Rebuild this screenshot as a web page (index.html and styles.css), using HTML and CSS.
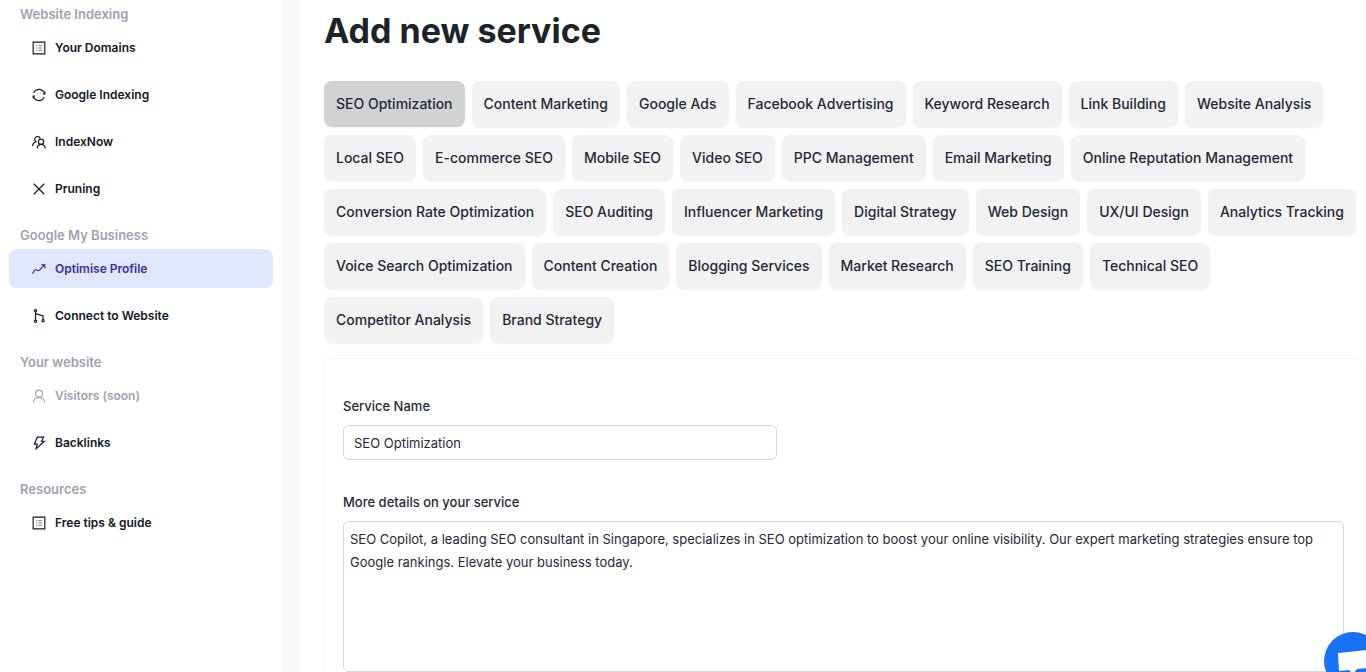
FILE: index.html
```
<!DOCTYPE html>
<html lang="en">
<head>
    <meta charset="UTF-8">
    <meta name="viewport" content="width=device-width, initial-scale=1.0">
    <title>Add new service</title>
    <link rel="stylesheet" href="styles.css">
</head>
<body>

    <!-- shared icons -->
    <svg class="sprite" aria-hidden="true">
        <symbol id="i-list" viewBox="0 0 24 24"><path d="M2 2h20v20H2z"/><path class="thin" d="M11 8h6M11 12h6M11 16h6M7 8h2M7 12h2M7 16h2"/></symbol>
        <symbol id="i-refresh" viewBox="0 0 24 24"><path d="M3 8a10 10 0 0 1 18 0M22 6v4h-3M21 16a10 10 0 0 1-18 0M2 18v-4h3"/></symbol>
        <symbol id="i-users" viewBox="0 0 24 24"><path d="M9 23c0-4 3-7 7-7s6 3 7 7"/><circle cx="15.500" cy="11.500" r="4.500"/><path d="M1 19c0-4 2-6 5-7M8 12a4.800 4.800 0 1 1 6-6"/></symbol>
        <symbol id="i-close" viewBox="0 0 24 24"><path d="M3 3l18 18M21 3L3 21"/></symbol>
        <symbol id="i-trend" viewBox="0 0 24 24"><path d="M1 20c2-4 4-8 6-7s4 3 6 1 4-6 9-9M16 5h6v6"/></symbol>
        <symbol id="i-branch" viewBox="0 0 24 24"><path d="M6 5v14M6 8l13 4v6"/><circle cx="6" cy="3" r="2"/><circle cx="6" cy="21" r="2"/><circle cx="19" cy="20" r="2"/></symbol>
        <symbol id="i-user" viewBox="0 0 24 24"><path d="M2 23c1-6 5-8 10-8s9 2 10 8"/><circle cx="12" cy="8" r="6"/></symbol>
        <symbol id="i-flash" viewBox="0 0 24 24"><path d="M9 2h11l-4 7h5L7 22l2-8H4z"/></symbol>
    </svg>

    <div class="app">
        <nav class="sidebar">
            <div class="group">
                <h2>Website Indexing</h2>
                <a href="#"><svg><use href="#i-list"/></svg>Your Domains</a>
                <a href="#"><svg><use href="#i-refresh"/></svg>Google Indexing</a>
                <a href="#"><svg><use href="#i-users"/></svg>IndexNow</a>
                <a href="#"><svg><use href="#i-close"/></svg>Pruning</a>
            </div>
            <div class="group">
                <h2>Google My Business</h2>
                <a href="#" class="active"><svg><use href="#i-trend"/></svg>Optimise Profile</a>
                <a href="#"><svg><use href="#i-branch"/></svg>Connect to Website</a>
            </div>
            <div class="group">
                <h2>Your website</h2>
                <a href="#" class="disabled"><svg><use href="#i-user"/></svg>Visitors (soon)</a>
                <a href="#"><svg><use href="#i-flash"/></svg>Backlinks</a>
            </div>
            <div class="group">
                <h2>Resources</h2>
                <a href="#"><svg><use href="#i-list"/></svg>Free tips &amp; guide</a>
            </div>
        </nav>

        <main class="content">
            <h1>Add new service</h1>

            <div class="services">
                <button type="button" class="selected">SEO Optimization</button>
                <button type="button">Content Marketing</button>
                <button type="button">Google Ads</button>
                <button type="button">Facebook Advertising</button>
                <button type="button">Keyword Research</button>
                <button type="button">Link Building</button>
                <button type="button">Website Analysis</button>
                <button type="button">Local SEO</button>
                <button type="button">E-commerce SEO</button>
                <button type="button">Mobile SEO</button>
                <button type="button">Video SEO</button>
                <button type="button">PPC Management</button>
                <button type="button">Email Marketing</button>
                <button type="button">Online Reputation Management</button>
                <button type="button">Conversion Rate Optimization</button>
                <button type="button">SEO Auditing</button>
                <button type="button">Influencer Marketing</button>
                <button type="button">Digital Strategy</button>
                <button type="button">Web Design</button>
                <button type="button">UX/UI Design</button>
                <button type="button">Analytics Tracking</button>
                <button type="button">Voice Search Optimization</button>
                <button type="button">Content Creation</button>
                <button type="button">Blogging Services</button>
                <button type="button">Market Research</button>
                <button type="button">SEO Training</button>
                <button type="button">Technical SEO</button>
                <button type="button">Competitor Analysis</button>
                <button type="button">Brand Strategy</button>
            </div>

            <form class="card">
                <div class="field">
                    <label for="name">Service Name</label>
                    <input type="text" id="name" value="SEO Optimization">
                </div>
                <div class="field">
                    <label for="details">More details on your service</label>
                    <textarea id="details" spellcheck="false">SEO Copilot, a leading SEO consultant in Singapore, specializes in SEO optimization to boost your online visibility. Our expert marketing strategies ensure top Google rankings. Elevate your business today.</textarea>
                </div>
            </form>
        </main>
    </div>

    <button type="button" class="chat" aria-label="Open chat">
        <svg viewBox="0 0 32 32"><path d="M1 8l29-3v18l-10 1-4 5-4-4-10 1z"/></svg>
    </button>

</body>
</html>
```
FILE: styles.css
```
* {
    box-sizing: border-box;
}

body {
    margin: 0;
    font-family: Inter, "Liberation Sans", sans-serif;
    color: #1f2937;
    background: #f8fafc;
}

.sprite {
    display: none;
}

.app {
    display: flex;
    gap: 19px;
    height: 100vh;
    overflow: hidden;
}

/* Sidebar */
.sidebar {
    flex: 0 0 282px;
    display: flex;
    flex-direction: column;
    gap: 17px;
    padding: 4px 9px;
    background: #fff;
}

.group {
    display: flex;
    flex-direction: column;
    gap: 8px;
}

.group h2 {
    margin: 0 0 -4px;
    padding-left: 11px;
    font-size: 13px;
    line-height: 20px;
    font-weight: 600;
    color: #9ca3af;
}

.group a {
    display: flex;
    align-items: center;
    gap: 9px;
    height: 39px;
    padding-left: 23px;
    border-radius: 8px;
    font-size: 12px;
    font-weight: 600;
    color: #111827;
    text-decoration: none;
}

.group a svg {
    width: 14px;
    height: 14px;
    fill: none;
    stroke: currentColor;
    stroke-width: 2;
}

.thin {
    stroke-width: 1;
}

.group a.active {
    background: #e0e7ff;
    color: #3730a3;
}

.group a.disabled {
    color: #9ca3af;
}

/* Content */
.content {
    flex: 1;
    min-width: 0;
    padding: 9px 3px 0 23px;
    background: #fff;
}

h1 {
    margin: 0 0 28px;
    font-size: 34px;
    line-height: 44px;
    font-weight: 700;
    color: #1d232a;
}

.services {
    display: flex;
    flex-wrap: wrap;
    gap: 8px 7px;
}

.services button {
    height: 46px;
    padding: 0 12px 2px;
    border: none;
    border-radius: 8px;
    background: #f2f2f2;
    box-shadow: 0 1px 2px rgba(0, 0, 0, 0.05);
    font-family: inherit;
    font-size: 14px;
    font-weight: 500;
    color: #1f2937;
    cursor: pointer;
}

.services button.selected {
    background: #d1d3d3;
}

.card {
    display: flex;
    flex-direction: column;
    gap: 32px;
    height: 400px;
    margin-top: 16px;
    padding: 37px 19px;
    border-radius: 8px;
    box-shadow: 0 0 2px rgba(0, 0, 0, 0.12);
}

.field {
    display: flex;
    flex-direction: column;
    gap: 9px;
}

.field label {
    font-size: 13px;
    line-height: 20px;
    font-weight: 500;
}

.field input,
.field textarea {
    border: 1px solid #d9d9d9;
    border-radius: 6px;
    background: #fff;
    font-family: inherit;
    font-size: 13px;
    color: #1f2937;
    outline: none;
}

.field input {
    width: 434px;
    max-width: 100%;
    height: 35px;
    padding: 0 10px;
}

.field textarea {
    height: 151px;
    padding: 6px;
    line-height: 23px;
    resize: none;
}

/* Chat launcher */
.chat {
    position: fixed;
    right: -16px;
    bottom: -18px;
    display: flex;
    align-items: center;
    justify-content: center;
    width: 58px;
    height: 58px;
    padding: 0;
    border: none;
    border-radius: 50%;
    background: #1972f5;
    cursor: pointer;
}

.chat svg {
    width: 32px;
    height: 32px;
    fill: #fff;
}
```
